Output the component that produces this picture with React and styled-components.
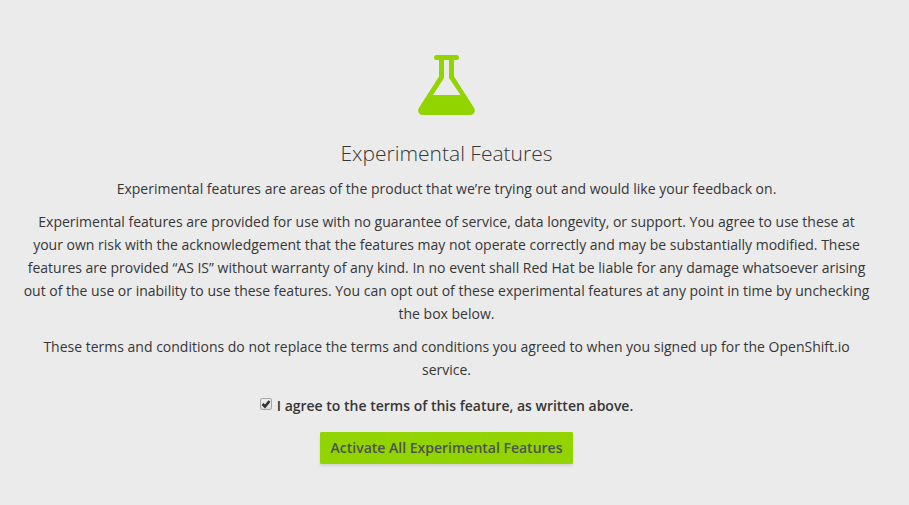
import React, { useState } from "react";
import styled, { createGlobalStyle } from "styled-components";

const GlobalStyle = createGlobalStyle`
  *, *::before, *::after { box-sizing: border-box; }
  html { background: #ebebeb; }
  body {
    margin: 0;
    color: #363636;
    background: #ebebeb;
    font-family: "Open Sans", sans-serif;
    font-size: 14px;
    line-height: 23px;
  }
`;

const Panel = styled.main`
  display: flex;
  flex-direction: column;
  align-items: center;
  min-height: 100vh;
  padding: 55px 38px 40px 22px;
  text-align: center;
`;

const Flask = styled.svg`
  display: block;
  width: 57px;
  height: 60px;
  fill: #92d400;
`;

const Title = styled.h1`
  margin: 25px 0 11px;
  font-size: 21px;
  font-weight: 300;
  line-height: 26px;
`;

const Paragraph = styled.p`
  margin: 0 0 10px;
`;

const Agreement = styled.label`
  display: flex;
  align-items: center;
  gap: 5px;
  margin: 3px 0 15px;
  font-weight: 600;
`;

const Tick = styled.span`
  display: grid;
  margin-bottom: 3px;
  & > * { grid-area: 1 / 1; }
`;

const Checkbox = styled.input`
  appearance: none;
  width: 12px;
  height: 12px;
  margin: 0;
  border: 1px solid #a6a6a6;
  border-radius: 2px;
  background: linear-gradient(#eeeeee, #dcdcdc);
  &:not(:checked) + svg { visibility: hidden; }
`;

const TickMark = styled.svg`
  width: 12px;
  height: 12px;
  fill: none;
  stroke: #333333;
  stroke-width: 2.6;
  pointer-events: none;
`;

const Button = styled.button`
  padding: 4px 10px;
  border: 1px solid #92d400;
  border-radius: 1px;
  background: #92d400;
  box-shadow: 0 2px 3px rgba(3, 3, 3, 0.1);
  color: #4d5258;
  font: inherit;
  font-weight: 600;
  line-height: 22px;
  cursor: pointer;
`;

export default function App() {
  const [agreed, setAgreed] = useState(true);
  return (
    <>
      <GlobalStyle />
      <Panel>
        <Flask viewBox="0 0 57 60" aria-hidden="true">
          <path
            fillRule="evenodd"
            d="M18.500 0H38.500a2.500 2.500 0 0 1 0 5H36V21.500L55.500 52C58.500 56.500 56 60 52 60H5C1 60-1.500 56.500 1.500 52L21 21.500V5H18.500a2.500 2.500 0 0 1 0-5ZM26 5V23L15 40H42.500L31 23V5Z"
          />
        </Flask>
        <Title>Experimental Features</Title>
        <Paragraph>
          Experimental features are areas of the product that we’re trying out and would like your feedback on.
        </Paragraph>
        <Paragraph>
          Experimental features are provided for use with no guarantee of service, data longevity, or support. You agree
          to use these at your own risk with the acknowledgement that the features may not operate correctly and may be
          substantially modified. These features are provided “AS IS” without warranty of any kind. In no event shall
          Red Hat be liable for any damage whatsoever arising out of the use or inability to use these features. You can
          opt out of these experimental features at any point in time by unchecking the box below.
        </Paragraph>
        <Paragraph>
          These terms and conditions do not replace the terms and conditions you agreed to when you signed up for the
          OpenShift.io service.
        </Paragraph>
        <Agreement>
          <Tick>
            <Checkbox type="checkbox" checked={agreed} onChange={(e) => setAgreed(e.target.checked)} />
            <TickMark viewBox="0 0 12 12" aria-hidden="true">
              <path d="M2.500 6L5 8.500L9.500 3" />
            </TickMark>
          </Tick>
          I agree to the terms of this feature, as written above.
        </Agreement>
        <Button type="button">Activate All Experimental Features</Button>
      </Panel>
    </>
  );
}
